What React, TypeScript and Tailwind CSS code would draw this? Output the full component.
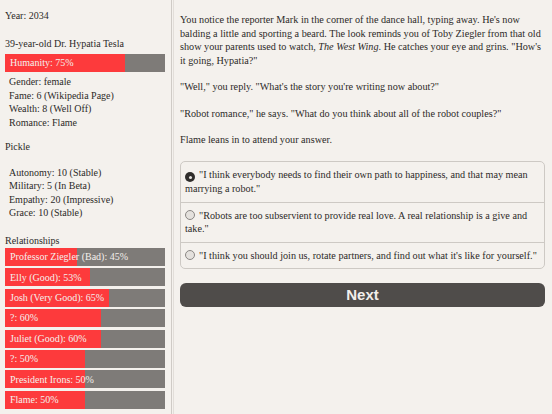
const serif = { fontFamily: '"Palatino Linotype", "Book Antiqua", "Liberation Serif", serif' };

function Bar({ label, pct }: { label: string; pct: number }) {
  return (
    <div className="relative h-[18px] bg-[#7e7b78]">
      <div className="h-full bg-[#fd3a3c]" style={{ width: `${pct}%` }} />
      <div className="absolute inset-0 flex items-center pl-[5px] text-[#f4f0ec] whitespace-nowrap">{label}</div>
    </div>
  );
}

const relationships = [
  { label: 'Professor Ziegler (Bad): 45%', pct: 45 },
  { label: 'Elly (Good): 53%', pct: 53 },
  { label: 'Josh (Very Good): 65%', pct: 65 },
  { label: '?: 60%', pct: 60 },
  { label: 'Juliet (Good): 60%', pct: 60 },
  { label: '?: 50%', pct: 50 },
  { label: 'President Irons: 50%', pct: 50 },
  { label: 'Flame: 50%', pct: 50 },
];

const choices = [
  '"I think everybody needs to find their own path to happiness, and that may mean marrying a robot."',
  '"Robots are too subservient to provide real love. A real relationship is a give and take."',
  '"I think you should join us, rotate partners, and find out what it\'s like for yourself."',
];

function Radio({ checked }: { checked: boolean }) {
  if (checked) {
    return (
      <span className="inline-flex w-[10px] h-[10px] mr-[4px] align-[-1px] rounded-full bg-[#2f2d2b] items-center justify-center">
        <span className="w-[3px] h-[3px] rounded-full bg-[#e8e5e1]" />
      </span>
    );
  }
  return <span className="inline-block w-[10px] h-[10px] mr-[4px] align-[-1px] rounded-full border border-[#8a8784] bg-[#e4e1dd]" />;
}

export default function App() {
  return (
    <div className="w-[552px] h-[414px] overflow-hidden flex bg-[#f4f1ed] text-[#2c2a28] text-[10px] leading-[13.5px]" style={serif}>
      <aside className="w-[172px] shrink-0 border-r border-[#cfcbc6] pl-[5px] pr-[6px] pt-[9px]">
        <p>Year: 2034</p>
        <p className="mt-[14px]">39-year-old Dr. Hypatia Tesla</p>
        <div className="mt-[4px]">
          <Bar label="Humanity: 75%" pct={75} />
        </div>
        <div className="pl-[4px] mt-[3px]">
          <p>Gender: female</p>
          <p>Fame: 6 (Wikipedia Page)</p>
          <p>Wealth: 8 (Well Off)</p>
          <p>Romance: Flame</p>
        </div>
        <p className="mt-[11px]">Pickle</p>
        <div className="pl-[4px] mt-[12px]">
          <p>Autonomy: 10 (Stable)</p>
          <p>Military: 5 (In Beta)</p>
          <p>Empathy: 20 (Impressive)</p>
          <p>Grace: 10 (Stable)</p>
        </div>
        <p className="mt-[14px]">Relationships</p>
        <div className="mt-[1px] flex flex-col gap-[2.4px]">
          {relationships.map((r) => (
            <Bar key={r.label} label={r.label} pct={r.pct} />
          ))}
        </div>
      </aside>
      <main className="flex-1 border-l border-[#e2ded9] ml-[1px] pl-[6px] pr-[4px] pt-[13px] text-[10.2px]">
        <p>
          You notice the reporter Mark in the corner of the dance hall, typing away. He's now balding a little and sporting a beard. The look reminds you of Toby Ziegler from that old show your parents used to watch, <i>The West Wing</i>. He catches your eye and grins. "How's it going, Hypatia?"
        </p>
        <p className="mt-[13px]">"Well," you reply. "What's the story you're writing now about?"</p>
        <p className="mt-[13px]">"Robot romance," he says. "What do you think about all of the robot couples?"</p>
        <p className="mt-[13px]">Flame leans in to attend your answer.</p>
        <div className="mt-[14px] mr-[3px] border border-[#cdc9c4] rounded-[5px] overflow-hidden">
          {choices.map((c, i) => (
            <div key={i} className={`pl-[4px] pr-[2px] pt-[6px] pb-[6px] ${i > 0 ? 'border-t border-[#cdc9c4]' : ''}`}>
              <Radio checked={i === 0} />
              {c}
            </div>
          ))}
        </div>
        <button
          className="mt-[14px] w-[calc(100%-3px)] h-[24px] rounded-[6px] bg-[#4f4c4a] text-[#f2efeb] font-bold text-[15px] flex items-center justify-center"
          style={{ fontFamily: '"Liberation Sans", Arial, sans-serif' }}
        >
          Next
        </button>
      </main>
    </div>
  );
}
